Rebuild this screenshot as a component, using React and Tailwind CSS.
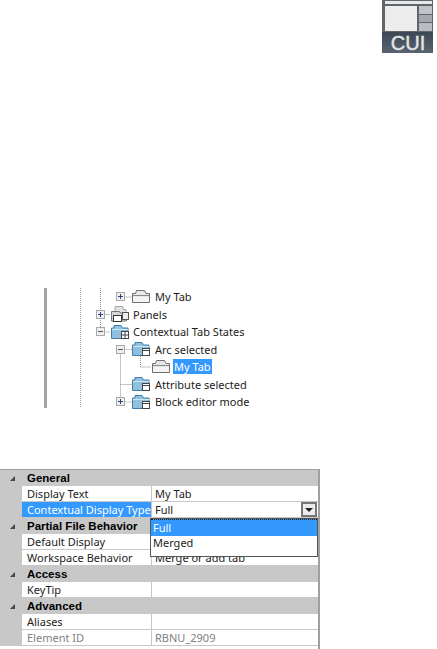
const FONT = "font-['Noto_Sans',Arial,sans-serif]";
const BOLD = "font-['Liberation_Sans',Arial,sans-serif]";

const CuiIcon = () => (
  <svg width="51" height="53" viewBox="0 0 51 53" className="block">
    <defs>
      <linearGradient id="cuiBar" x1="0" y1="0" x2="0" y2="1">
        <stop offset="0" stopColor="#3c4753" />
        <stop offset="1" stopColor="#5a6470" />
      </linearGradient>
    </defs>
    <rect x="0" y="0" width="51" height="33" fill="#5f656b" />
    <rect x="3" y="1" width="47" height="3" fill="#e8e8e8" />
    <rect x="3" y="6" width="32" height="25" fill="#ececec" />
    <rect x="37" y="6" width="13" height="8" fill="#c0c4c8" />
    <rect x="37" y="15" width="13" height="7" fill="#a4a9ae" />
    <rect x="37" y="23" width="13" height="8" fill="#b8bcc0" />
    <rect x="0" y="32" width="51" height="21" fill="url(#cuiBar)" />
    <text x="26" y="50" textAnchor="middle" fontSize="20" fontFamily="Liberation Sans" stroke="#e6e6e6" strokeWidth="0.4" fill="#e6e6e6">CUI</text>
  </svg>
);

const Expander = ({ open, x }) => (
  <span className={`absolute top-[4px] w-[9px] h-[9px] border border-[#a8a8a8] bg-[#efefef] flex items-center justify-center z-10 ${x}`}>
    <svg width="7" height="7" viewBox="0 0 7 7">
      <rect x="1" y="3" width="5" height="1" fill={open ? "#555" : "#2d3f8f"} />
      {!open && <rect x="3" y="1" width="1" height="5" fill="#2d3f8f" />}
    </svg>
  </span>
);

const TabIcon = () => (
  <svg width="18" height="13" viewBox="0 0 18 13" className="shrink-0">
    <path d="M4.500 .5h8l1.500 3h3.500v9h-17v-9h3z" fill="#e8e8e8" stroke="#6f6f6f" />
    <path d="M1 5.500h16" stroke="#8a8a8a" />
    <path d="M1 7h16v5h-16z" fill="#f4f4f4" />
  </svg>
);

const FolderIcon = ({ badge }) => (
  <svg width="18" height="14" viewBox="0 0 18 14" className="shrink-0">
    <path d="M3 .5h7l1.500 2.500h5.500v10.500h-16.500v-10.500h2.500z" fill="#8fc0e0" stroke="#3f7ea6" />
    <path d="M1 4.500h16" stroke="#cfe6f5" />
    <rect x="10.500" y="6.500" width="7" height="7" fill="#fff" stroke="#444" />
    {badge && <path d="M14 6.500v7M10.500 10h7" stroke="#444" />}
    {!badge && <path d="M10.500 8.500h7" stroke="#444" />}
  </svg>
);

const PanelsIcon = () => (
  <svg width="18" height="16" viewBox="0 0 18 16" className="shrink-0">
    <path d="M4 .5h8v3h3v4h-11z" fill="#e2e2e2" stroke="#aaa" />
    <path d="M.5 5.500h8l1 1.500h6v8h-15z" fill="#d6d6d6" stroke="#777" />
    <rect x="2.500" y="9.500" width="8" height="6" fill="#fff" stroke="#333" />
    <rect x="11.500" y="6.500" width="6" height="7" fill="#eee" stroke="#555" />
  </svg>
);

const TreeRow = ({ indent, icon, children, selected, expander, expanderX, gap = "ml-[4px]" }) => (
  <div className={`relative h-[17.5px] flex items-center ${indent}`}>
    {expander && <Expander open={expander === "open"} x={expanderX} />}
    {icon}
    <span className={`px-[1px] leading-[15px] whitespace-nowrap ${gap} ${selected ? "bg-[#3399ff] text-white" : "text-[#1c1c1c]"}`}>{children}</span>
  </div>
);

const Tree = () => (
  <div className="relative ml-[44px] w-[230px] h-[120px] border-l-[3px] border-[#a3a3a3] text-[11px]">
    <svg width="120" height="120" className="absolute left-0 top-0 pointer-events-none" fill="none" stroke="#8c8c8c" strokeDasharray="1 1">
      <path d="M33.500 0v120" stroke="#aaa" />
      <path d="M53.500 0v44" />
      <path d="M53.500 26.500h10M53.500 44h10" />
      <path d="M73.500 61.500v52.500M73.500 61.500h11M73.500 96.500h11M73.500 114h11M73.500 9h11" />
      <path d="M93.500 68v11h11" />
    </svg>
    <TreeRow indent="pl-[85px]" icon={<TabIcon />} expander="closed" expanderX="left-[69px]">My Tab</TreeRow>
    <TreeRow indent="pl-[64px]" icon={<PanelsIcon />} expander="closed" expanderX="left-[49px]" gap="ml-[3px]">Panels</TreeRow>
    <TreeRow indent="pl-[64px]" icon={<FolderIcon badge />} expander="open" expanderX="left-[49px]" gap="ml-[3px]">Contextual Tab States</TreeRow>
    <TreeRow indent="pl-[85px]" icon={<FolderIcon />} expander="open" expanderX="left-[69px]">Arc selected</TreeRow>
    <TreeRow indent="pl-[105px]" icon={<TabIcon />} selected gap="ml-[3px]">My Tab</TreeRow>
    <TreeRow indent="pl-[85px]" icon={<FolderIcon />}>Attribute selected</TreeRow>
    <TreeRow indent="pl-[85px]" icon={<FolderIcon />} expander="closed" expanderX="left-[69px]">Block editor mode</TreeRow>
  </div>
);

const Caret = () => (
  <svg width="8" height="4" viewBox="0 0 8 4" className="fill-[#222]">
    <path d="M0 0h8l-4 4z" />
  </svg>
);

const Section = ({ children }) => (
  <div className="h-[16px] bg-[#c8c8c8] flex items-center">
    <span className="w-[22px] flex justify-center pl-[3px]">
      <svg width="7" height="7" viewBox="0 0 7 7" className="fill-[#444]"><path d="M6 1v5h-5z" /></svg>
    </span>
    <span className={`pl-[5px] pt-[1px] font-bold text-[11.5px] text-black ${BOLD}`}>{children}</span>
  </div>
);

const Row = ({ name, value, selected, muted, children }) => (
  <div className="h-[16px] flex bg-[#c8c8c8]">
    <div className={`ml-[22px] w-[129px] border-b border-[#c8c8c8] pl-[5px] leading-[15px] overflow-hidden whitespace-nowrap ${selected ? "bg-[#3399ff] text-white" : muted ? "bg-white text-[#808080]" : "bg-white text-[#222]"}`}>{name}</div>
    <div className={`ml-[1px] flex-1 border-b border-[#c8c8c8] bg-white pl-[3px] leading-[15px] flex ${muted ? "text-[#808080]" : "text-[#222]"}`}>{value}{children}</div>
  </div>
);

const Props = () => (
  <div className="relative w-[320px] h-[180px] border-t border-r-2 border-[#a0a0a0] bg-white text-[11px]">
    <Section>General</Section>
    <Row name="Display Text" value="My Tab" />
    <Row name="Contextual Display Type" value="Full" selected>
      <span className="ml-auto mr-[1px] w-[16px] h-[15px] border-2 border-[#777] bg-[#ececec] flex items-center justify-center"><Caret /></span>
    </Row>
    <Section>Partial File Behavior</Section>
    <Row name="Default Display" value="" />
    <Row name="Workspace Behavior" value="Merge or add tab" />
    <Section>Access</Section>
    <Row name="KeyTip" value="" />
    <Section>Advanced</Section>
    <Row name="Aliases" value="" />
    <Row name="Element ID" value="RBNU_2909" muted />
    <div className="absolute left-[150px] top-[48px] w-[168px] h-[39px] border border-[#555] bg-white text-[#222] z-10">
      <div className="h-[17px] bg-[#3399ff] text-white pl-[2px] leading-[15px] border-t border-dotted border-[#222]">Full</div>
      <div className="h-[16px] pl-[2px] leading-[14px]">Merged</div>
    </div>
  </div>
);

export default function App() {
  return (
    <div className={`w-[437px] h-[649px] overflow-hidden bg-white flex flex-col ${FONT}`}>
      <div className="flex justify-end pr-[4px] h-[288px]"><CuiIcon /></div>
      <Tree />
      <div className="h-[61px]" />
      <Props />
    </div>
  );
}
